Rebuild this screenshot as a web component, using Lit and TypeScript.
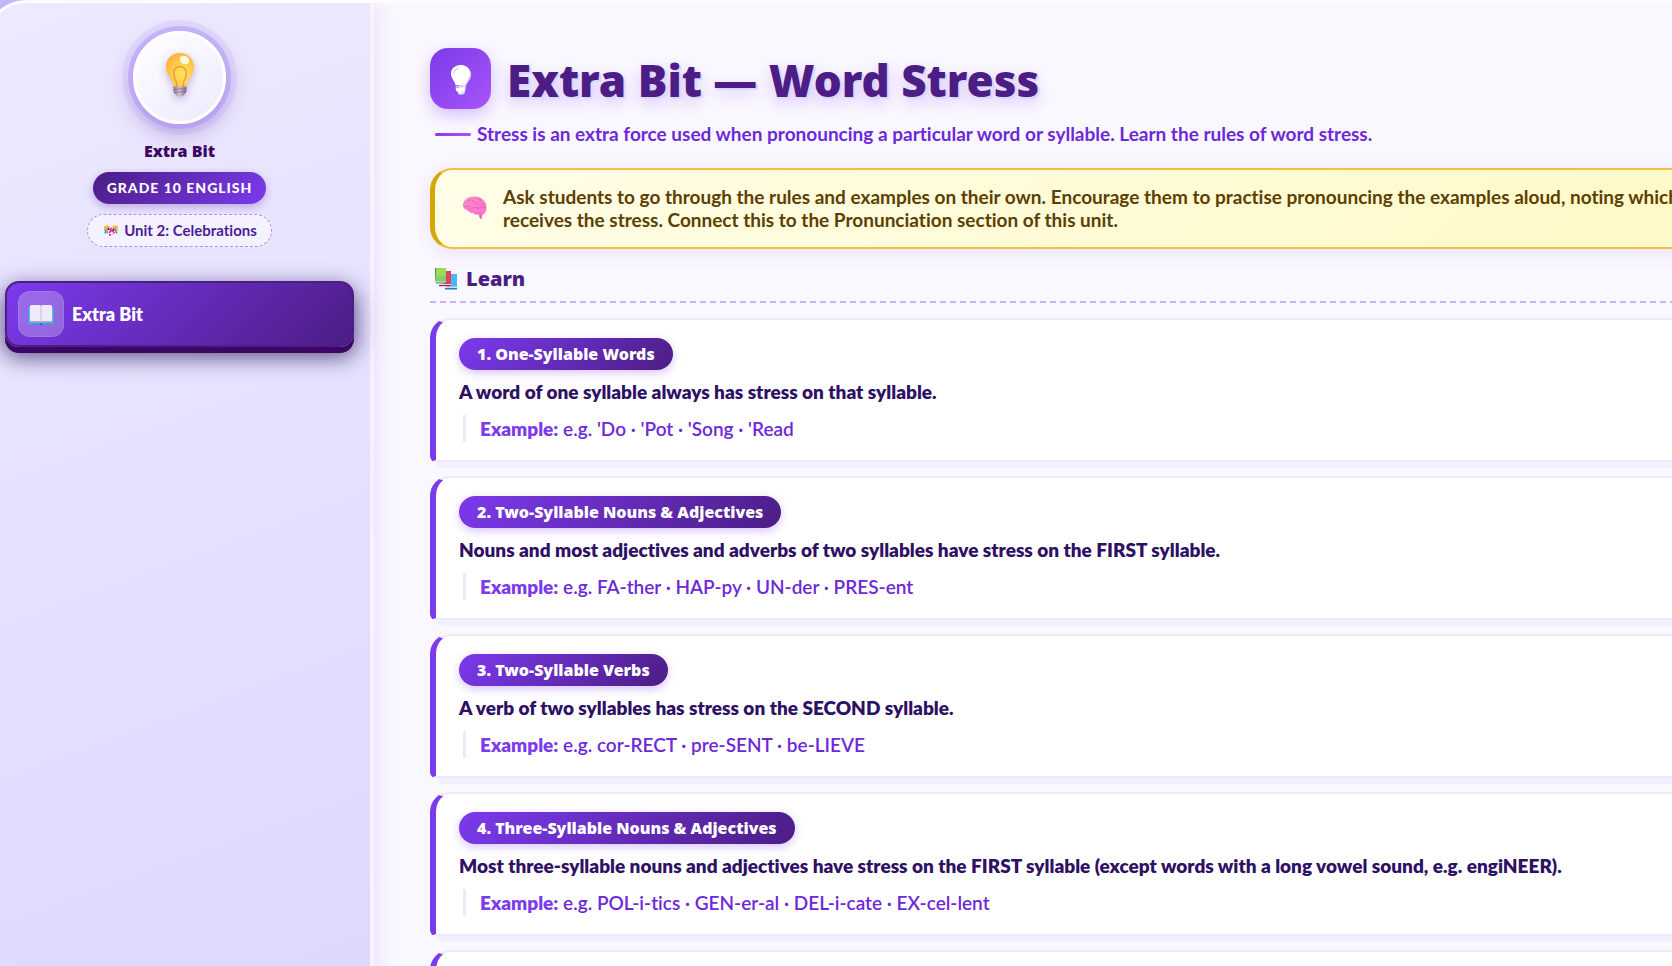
import { LitElement, html, css } from "lit";
import { customElement } from "lit/decorators.js";

interface Rule {
  title: string;
  text: string;
  example: string;
}

const RULES: Rule[] = [
  {
    title: "1. One-Syllable Words",
    text: "A word of one syllable always has stress on that syllable.",
    example: "e.g. 'Do · 'Pot · 'Song · 'Read",
  },
  {
    title: "2. Two-Syllable Nouns & Adjectives",
    text: "Nouns and most adjectives and adverbs of two syllables have stress on the FIRST syllable.",
    example: "e.g. FA-ther · HAP-py · UN-der · PRES-ent",
  },
  {
    title: "3. Two-Syllable Verbs",
    text: "A verb of two syllables has stress on the SECOND syllable.",
    example: "e.g. cor-RECT · pre-SENT · be-LIEVE",
  },
  {
    title: "4. Three-Syllable Nouns & Adjectives",
    text: "Most three-syllable nouns and adjectives have stress on the FIRST syllable (except words with a long vowel sound, e.g. engiNEER).",
    example: "e.g. POL-i-tics · GEN-er-al · DEL-i-cate · EX-cel-lent",
  },
];

const bulb = html`<svg class="bulb" viewBox="0 0 28 44" width="28" height="44" aria-hidden="true">
  <defs>
    <radialGradient id="glass" cx="0.6" cy="0.62" r="0.65">
      <stop offset="0" stop-color="#ffe566" />
      <stop offset="0.5" stop-color="#ffcf4a" />
      <stop offset="1" stop-color="#fdb43c" />
    </radialGradient>
    <linearGradient id="screw" x1="0" x2="1" y1="0" y2="0">
      <stop offset="0" stop-color="#8d7690" />
      <stop offset="0.45" stop-color="#d0c2cd" />
      <stop offset="1" stop-color="#84698c" />
    </linearGradient>
  </defs>
  <path fill="url(#glass)" d="M14 0C6 0 0 6 0 14c0 6.500 3.600 9.500 5.800 13.500 1.200 2.300 1.600 4 1.800 6.500h12.800c.2-2.500.6-4.200 1.800-6.500C24.400 23.500 28 20.500 28 14 28 6 22 0 14 0Z" />
  <path fill="none" stroke="#f79a3e" stroke-width="1.500" d="M11 34c0-4-.6-6-2-8.500-1.200-2-1.400-3.500-1.200-6a6.200 6 0 0 1 12.400 0c.2 2.500 0 4-1.200 6-1.400 2.500-2 4.500-2 8.500" />
  <ellipse cx="18.500" cy="7" rx="5" ry="4" fill="#fff" opacity="0.85" transform="rotate(30 18.500 7)" />
  <path fill="url(#screw)" d="M7.600 33.500h12.800v5.500l-2.400 3c-1 1.700-7 1.700-8 0l-2.400-3Z" />
  <path stroke="#7d6787" stroke-width="1" opacity="0.7" d="M7.600 36.500l12.800-1M8 39.500l12-1" />
</svg>`;

const bulbMono = html`<svg viewBox="0 0 20 34" width="20" height="30" preserveAspectRatio="none" aria-hidden="true">
  <path fill="#ddd6fe" d="M11 0c6 1 9.500 6 9 12-.4 5-4 8-5 12l-1 7c-.4 3-5 3.500-7 2Z" />
  <path fill="#fff" d="M9.500 0C4 0 0 4.200 0 9.800c0 5.200 3.700 8 4.600 13.200h9.200c.9-4 5-8 5-13.200C18.800 4.200 15 0 9.500 0Z" />
  <path fill="#fff" d="M4.500 25.500h9.300l-.6 4-2.500 1.200c-.5 2-3 2-3.500.2l-2-1.400Z" />
  <path fill="none" stroke="#d3c3fb" stroke-width="1.200" stroke-linecap="round" d="M3 9c.3-2.700 2-4.500 4.500-5M5 24.300h8.500" />
</svg>`;

const book = html`<svg class="book" viewBox="0 0 26 22" width="26" height="22" aria-hidden="true">
  <path fill="#38a3e6" d="M0 3h26v16.500H15l-2 1.500-2-1.500H0Z" />
  <path fill="#2b5fc0" d="M11 18.500h4l-2 2Z" />
  <path fill="#b3a6c2" d="M1.800 3h22.400v14.600H1.800Z" />
  <path fill="#efe9fa" d="M1.800 1.600Q2 0 3.500 0h8Q13 0 13 1.600V16H1.800ZM13 1.600Q13 0 14.500 0h8q1.500 0 1.700 1.600V16H13Z" />
  <path fill="#d6cbe8" d="M12.200 1h1.600v15.500h-1.600Z" />
</svg>`;

const brain = html`<svg viewBox="0 0 25 24" width="25" height="24" aria-hidden="true">
  <defs>
    <linearGradient id="lobe" x1="0" x2="0.6" y1="0" y2="1">
      <stop offset="0" stop-color="#f58fc0" />
      <stop offset="1" stop-color="#ff74d6" />
    </linearGradient>
  </defs>
  <path fill="url(#lobe)" d="M1 8C2 3.500 6 .8 11 .5c4-.4 8 .6 10.500 3.500 2.500 2.500 3.300 5.500 2.900 9-.3 3.200-1.900 5.600-4.800 6.200l.2 3c-.5.9-1.800.8-2-.1l-1.300-3.600c-2 .2-3.500-.4-4.300-1.500-2.700.4-5-.4-6.200-2.600C3 13.500.2 11.500 1 8Z" />
  <path fill="none" stroke="#d95aae" stroke-width="0.700" stroke-linecap="round" d="M2 10.500c2 1 4-.8 6-.3M5 6c2-2 4-2.500 6-1.500M10.500 4.500c.5 2.500 3 3 5 2M15 2.500c1 1.500 3.500 1 5 3M6 14c3-2.500 7-3 10.500-2M16.500 12c2-1.600 5-1.500 7-.3M17 8.500c1.500-.8 3.500-.5 5 .5M12 17.500c2 .6 5 .2 6.500-1.500" />
  <path fill="#e0489f" opacity="0.6" d="M17.500 18.500l2-.3.300 4c-.4.900-1.600.6-1.900-.1Z" />
</svg>`;

const books = html`<svg viewBox="0 0 22 22" width="22" height="22" aria-hidden="true">
  <path fill="#4ab8f0" d="M12 6h10v13H12Z" />
  <path fill="#d5dcec" d="M10 18.500h11.500v2H10Z" />
  <path fill="#2577c8" d="M10 20h12v1.500H10Z" />
  <path fill="#e63b62" d="M9 3h7v13.500H9Z" />
  <path fill="#e9ccd8" d="M5 16h11v1.500H5Z" />
  <path fill="#b3224e" d="M4 17h11.500v1.200H4Z" />
  <path fill="#7fcd68" d="M0 0h11v14H0Z" />
  <path fill="#9bdb58" d="M1.500 0H11v7L1.500 9Z" />
  <path fill="#d7e9e1" d="M0 13.500h11v1.300H0Z" />
  <path fill="#2e8565" d="M0 0h1v15.500h10v-.9H1Z" />
</svg>`;

const confetti = html`<svg viewBox="0 0 14 11" width="14" height="11" aria-hidden="true">
  <path fill="#f6b73c" d="M0 1.500 3 .2l3 1.300L4 5 0 6ZM8 1.500l3-1.300 3 1.300V6l-4-1Z" />
  <path fill="none" stroke="#e8336d" stroke-width="1.500" d="M4 3l3 2.500L5 8M7 2.500v4M10 3 8 6l3 2" />
  <path fill="none" stroke="#3b9be8" stroke-width="1.500" d="M2 4.500 1 8.500M11 4l2 4.500M3.500 5.500 3 8.500" />
  <path fill="#4b2a86" d="M3.500 3.500h1.500V5H3.500ZM9 4.500h1.500V6H9Z" />
  <path fill="#e8336d" d="M5 9h2v1.800H5ZM8.500 8.500h1v1h-1Z" />
</svg>`;

@customElement("app-root")
export class AppRoot extends LitElement {
  static styles = css`
    *, *::before, *::after { box-sizing: border-box; }
    :host {
      --display: "Noto Sans", "Open Sans", sans-serif;
      --body: Lato, "Open Sans", sans-serif;
      display: block;
      height: 100vh;
      overflow: hidden;
      background: #c4b5fd;
      font-family: var(--body);
      font-variant-ligatures: none;
      color: #2e1065;
    }
    h1, h2, h3, p { margin: 0; }
    svg { display: block; flex: none; }
    .shell {
      display: grid;
      grid-template-columns: 385px minmax(0, 1fr);
      height: 100%;
      margin: 0 -200px 0 -14px;
      border: 3px solid #fdfcff;
      border-bottom: 0;
      border-radius: 40px 40px 0 0;
      overflow: hidden;
      background: #faf8ff;
    }
    .side {
      display: flex;
      flex-direction: column;
      align-items: center;
      padding: 28px 16px;
      border-right: 4px solid #f6f3ff;
      background: linear-gradient(160deg, #ede9fe, #ddd6fe);
      box-shadow: 4px 0 20px rgba(124, 58, 237, 0.12);
      z-index: 1;
    }
    .avatar {
      display: grid;
      place-items: center;
      width: 93px;
      height: 93px;
      padding-bottom: 5px;
      border: 3px solid #fff;
      border-radius: 50%;
      background: linear-gradient(145deg, #fff, #ede9fe);
      box-shadow: 0 0 0 5px rgba(167, 139, 250, 0.42), 0 0 0 11px rgba(167, 139, 250, 0.14),
        0 8px 24px rgba(76, 29, 149, 0.35);
    }
    .bulb { filter: drop-shadow(0 3px 4px rgba(76, 29, 149, 0.3)); }
    .name {
      margin-top: 16px;
      font: 800 16px/22px "Open Sans", sans-serif;
      color: #3b0764;
    }
    .grade {
      margin-top: 10px;
      padding: 0 14px;
      border-radius: 16px;
      background: linear-gradient(135deg, #4c1d85, #7c3aed);
      box-shadow: 0 3px 8px rgba(76, 29, 149, 0.3);
      color: #fff;
      font-size: 14px;
      font-weight: 900;
      line-height: 32px;
      letter-spacing: 1px;
    }
    .unit {
      display: flex;
      align-items: center;
      gap: 6px;
      margin-top: 10px;
      padding: 0 14px 0 16px;
      border: 1px dashed #c084fc;
      border-radius: 17px;
      background: #f5f2ff;
      color: #4c1d95;
      font-size: 15px;
      font-weight: 700;
      line-height: 31px;
    }
    nav { align-self: stretch; margin-top: 34px; }
    .item {
      display: flex;
      align-items: center;
      gap: 8px;
      width: 100%;
      padding: 8px 11px;
      border: 2px solid #4c1d85;
      border-radius: 14px;
      background: linear-gradient(135deg, #7c3aed, #4c1d85);
      box-shadow: 0 6px 0 #3b0764, 0 8px 22px 2px rgba(30, 16, 84, 0.7);
      color: #fff;
      font: 800 18px/24px var(--body);
      text-align: left;
    }
    .tile {
      display: grid;
      place-items: center;
      width: 46px;
      height: 46px;
      border: 1px solid rgba(255, 255, 255, 0.1);
      border-radius: 12px;
      background: rgba(255, 255, 255, 0.25);
    }
    .book { margin-top: 3px; }
    main { padding: 45px 56px; }
    .head { display: flex; align-items: center; gap: 16px; }
    .badge {
      display: grid;
      place-items: center;
      width: 61px;
      height: 61px;
      padding-top: 3px;
      border-radius: 18px;
      background: linear-gradient(135deg, #7c3aed, #a855f7);
      box-shadow: 0 6px 16px rgba(124, 58, 237, 0.3);
    }
    h1 {
      padding-top: 3px;
      font: 900 44px/58px var(--display);
      color: #4c1d85;
      text-shadow: 2px 2px 0 #ddd6fe, 0 6px 16px rgba(124, 58, 237, 0.28);
    }
    .sub {
      display: flex;
      align-items: center;
      gap: 6px;
      margin-top: 13px;
      padding-left: 5px;
      color: #6d28d9;
      font-size: 19px;
      font-weight: 700;
      line-height: 24px;
    }
    .sub::before {
      content: "";
      width: 36px;
      height: 3px;
      border-radius: 2px;
      background: linear-gradient(90deg, #9333ea, #a855f7);
    }
    .note {
      display: flex;
      align-items: center;
      gap: 16px;
      margin-top: 22px;
      padding: 15px 28px 16px 27px;
      border: 2px solid #f0c040;
      border-left: 5px solid #d4a800;
      border-radius: 22px;
      background: linear-gradient(135deg, #fffde7, #fff9c4);
      box-shadow: 0 4px 20px rgba(124, 58, 237, 0.12);
      color: #5c4000;
      font-size: 19px;
      font-weight: 700;
      line-height: 23px;
    }
    h2 {
      display: flex;
      align-items: center;
      gap: 9px;
      margin-top: 16px;
      padding: 0 5px 10px;
      font: 900 20px/28px var(--display);
      color: #4c1d85;
      background: repeating-linear-gradient(90deg, #c4b5fd 0 6px, transparent 6px 10px) bottom / 100% 2px no-repeat;
    }
    .rules { display: grid; gap: 14px; margin-top: 15px; }
    .rule {
      display: grid;
      justify-items: start;
      gap: 9px;
      padding: 18px 23px;
      border: 2px solid #ede9fe;
      border-left: 6px solid #7c3aed;
      border-radius: 20px 20px 20px 6px;
      background: #fff;
      box-shadow: 6px 6px 0 #f2effe;
    }
    h3 {
      padding: 0 18px;
      border-radius: 16px;
      background: linear-gradient(135deg, #7c3aed, #4c1d85);
      box-shadow: 0 3px 10px rgba(124, 58, 237, 0.3);
      color: #fff;
      font: 900 16px/32px var(--display);
    }
    .text {
      padding-bottom: 2px;
      font-size: 19px;
      font-weight: 800;
      line-height: 25px;
    }
    .example {
      margin-left: 4px;
      padding-left: 14px;
      border-left: 3px solid #ede9fe;
      color: #6d28d9;
      font-size: 19px;
      font-weight: 600;
      line-height: 27px;
    }
    .example strong { color: #7c3aed; font-weight: 800; }
  `;

  render() {
    return html`
      <div class="shell">
        <aside class="side">
          <div class="avatar">${bulb}</div>
          <p class="name">Extra Bit</p>
          <p class="grade">GRADE 10 ENGLISH</p>
          <p class="unit">${confetti} Unit 2: Celebrations</p>
          <nav aria-label="Sections">
            <button class="item" type="button"><span class="tile">${book}</span>Extra Bit</button>
          </nav>
        </aside>
        <main>
          <header class="head">
            <span class="badge">${bulbMono}</span>
            <h1>Extra Bit — Word Stress</h1>
          </header>
          <p class="sub">
            Stress is an extra force used when pronouncing a particular word or syllable. Learn the rules of word stress.
          </p>
          <div class="note">
            ${brain}
            <p>
              Ask students to go through the rules and examples on their own. Encourage them to practise pronouncing the
              examples aloud, noting which syllable receives the stress. Connect this to the Pronunciation section of
              this unit.
            </p>
          </div>
          <h2>${books} Learn</h2>
          <div class="rules">
            ${RULES.map(
              (rule) => html`<section class="rule">
                <h3>${rule.title}</h3>
                <p class="text">${rule.text}</p>
                <p class="example"><strong>Example:</strong> ${rule.example}</p>
              </section>`
            )}
            <section class="rule"><p class="text">&nbsp;</p></section>
          </div>
        </main>
      </div>
    `;
  }
}
